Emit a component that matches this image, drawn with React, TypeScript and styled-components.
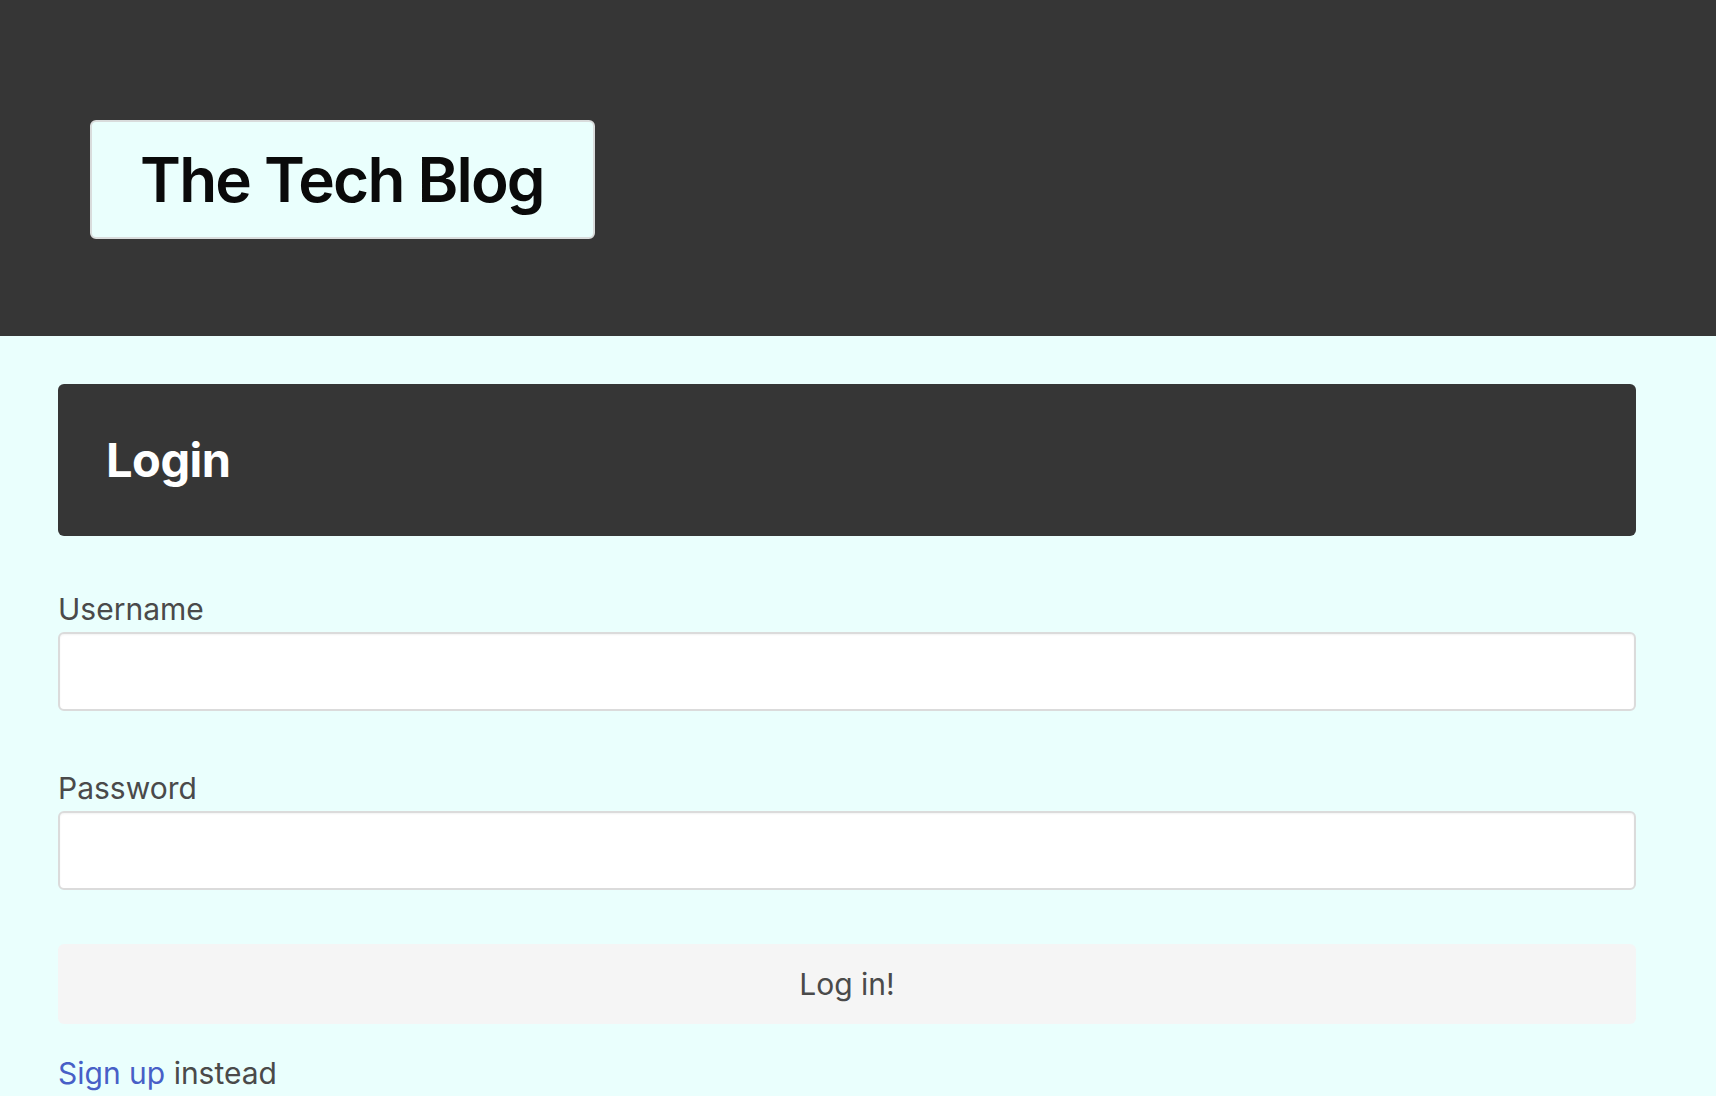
import React from "react";
import styled, { createGlobalStyle } from "styled-components";

const GlobalStyle = createGlobalStyle`
  html, body {
    margin: 0;
    padding: 0;
    background: #ffffff;
  }
  body {
    font-family: Inter, "Noto Sans", "Liberation Sans", sans-serif;
    color: #4a4a4a;
  }
  * { box-sizing: border-box; }
`;

const Shell = styled.div`
  padding-bottom: 8px;
  background: #ffffff;
`;

const Header = styled.header`
  background: #363636;
  padding: 120px 0 97px 90px;
`;

const TitleBox = styled.div`
  display: inline-block;
  background: #eafffd;
  border: 2px solid #d9dcdc;
  border-radius: 6px;
  padding: 22px 49px 21px 48px;
`;

const SiteTitle = styled.h1`
  margin: 0;
  font-size: 62px;
  line-height: 72px;
  font-weight: 600;
  color: #0a0a0a;
  letter-spacing: -1.8px;
`;

const Main = styled.main`
  background: #eafffd;
  padding: 48px 80px 0 58px;
`;

const Banner = styled.div`
  background: #363636;
  border-radius: 6px;
  padding: 48px 48px;
`;

const BannerTitle = styled.h2`
  margin: 0;
  font-size: 47px;
  line-height: 56px;
  font-weight: 700;
  color: #ffffff;
  letter-spacing: -0.5px;
`;

const Form = styled.form`
  display: flex;
  flex-direction: column;
  margin-top: 51px;
`;

const Field = styled.div<{ $gap?: number }>`
  display: flex;
  flex-direction: column;
  margin-bottom: ${(p) => p.$gap ?? 0}px;
`;

const Label = styled.label`
  font-size: 30px;
  line-height: 45px;
  font-weight: 400;
  color: #4a4a4a;
`;

const Input = styled.input`
  height: 79px;
  width: 100%;
  background: #ffffff;
  border: 2px solid #dbdbdb;
  border-radius: 6px;
  padding: 0 20px;
  font-size: 30px;
  font-family: inherit;
  outline: none;
  box-shadow: inset 0 1px 2px rgba(10, 10, 10, 0.05);
`;

const SubmitButton = styled.button`
  height: 80px;
  width: 100%;
  background: #f5f5f5;
  border: none;
  border-radius: 6px;
  font-family: inherit;
  font-size: 30px;
  color: #4a4a4a;
  cursor: pointer;
`;

const Footnote = styled.p`
  margin: 27px 0 0 0;
  font-size: 30px;
  line-height: 45px;
  color: #4a4a4a;
`;

const Link = styled.a`
  color: #485fc7;
  text-decoration: none;
`;

export default function App() {
  return (
    <Shell>
      <GlobalStyle />
      <Header>
        <TitleBox>
          <SiteTitle>The Tech Blog</SiteTitle>
        </TitleBox>
      </Header>
      <Main>
        <Banner>
          <BannerTitle>Login</BannerTitle>
        </Banner>
        <Form onSubmit={(e) => e.preventDefault()}>
          <Field $gap={55}>
            <Label htmlFor="username">Username</Label>
            <Input id="username" type="text" />
          </Field>
          <Field $gap={54}>
            <Label htmlFor="password">Password</Label>
            <Input id="password" type="password" />
          </Field>
          <SubmitButton type="submit">Log in!</SubmitButton>
        </Form>
        <Footnote>
          <Link href="#">Sign up</Link> instead
        </Footnote>
      </Main>
    </Shell>
  );
}
